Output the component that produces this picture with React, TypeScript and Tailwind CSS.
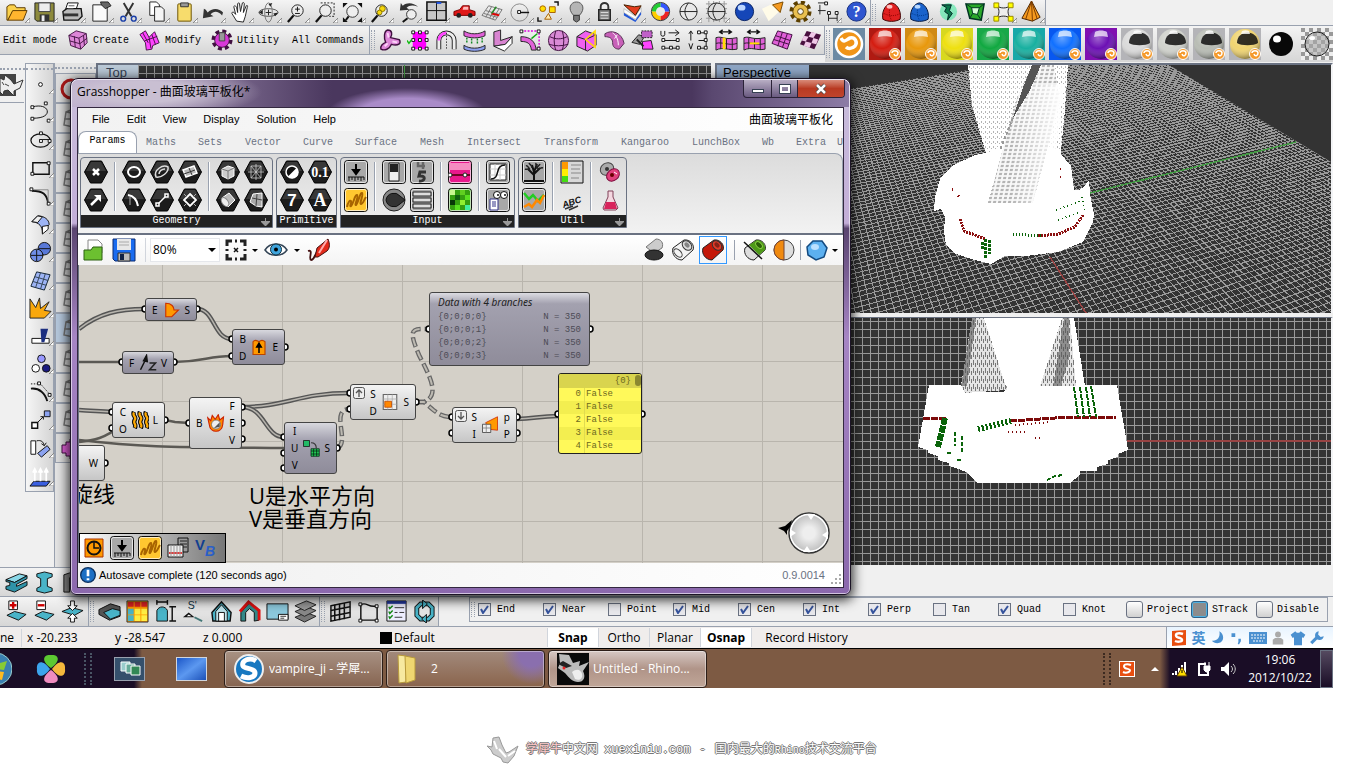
import type { ReactNode } from 'react';
import clsx from 'clsx';

const SONG = "font-['Liberation_Mono','Noto_Sans_CJK_SC',monospace] text-[10px]";
const SEGOE = "font-['Open_Sans','Noto_Sans_CJK_SC',sans-serif]";

type Item = [string, ReactNode];

const PINK = '#e060d8';

const lens = (
  <>
    <path d="M9 15l-6 7" stroke="#111" strokeWidth="2.4" />
    <circle cx="13" cy="10" r="6" fill="#eee" fillOpacity=".8" stroke="#222" />
  </>
);

const FILE_TOOLS: Item[] = [
  ['Open', <><path d="M2 20V6l3-2h5l2 3h9v4H8L3 20z" fill="#fbd14b" stroke="#5c3b00" /><path d="M3 20L8 10h15l-4 10z" fill="#ffb52e" stroke="#5c3b00" /></>],
  ['Save', <><path d="M2 2h20v19H4l-2-2z" fill="#8d8a3c" stroke="#222" /><path d="M6 2h12v9H6z" fill="#eee" stroke="#444" /><path d="M7 14h10v7H7z" fill="#333" /><path d="M9 15h3v6H9z" fill="#eee" /></>],
  ['Print', <><path d="M7 2h11l-3 9H4z" fill="#fff" stroke="#111" /><path d="M2 11l4-3h15l1 8-4 4H3z" fill="#bbb" stroke="#111" strokeWidth="1.4" /><path d="M3 13h15v3H3z" fill="#333" /><path d="M8 5h6M7 8h6" stroke="#555" /></>],
  ['Properties', <><path d="M4 4h12l3 3v14H4z" fill="#fafafa" stroke="#222" /><path d="M12 1h8l3 4-6 3-4-4z" fill="#666" stroke="#222" /></>],
  ['Cut', <><path d="M7 2l8 14M17 2L9 16" stroke="#333" strokeWidth="2" /><circle cx="6.5" cy="18.5" r="2.5" fill="none" stroke="#1a3fa8" strokeWidth="1.5" /><circle cx="17.5" cy="18.5" r="2.5" fill="none" stroke="#1a3fa8" strokeWidth="1.5" /></>],
  ['Copy', <><path d="M5 1h7l3 3v11H5z" fill="#fff" stroke="#222" /><path d="M10 6h7l3 3v12H10z" fill="#f5f5f5" stroke="#222" /></>],
  ['Paste', <><rect x="5" y="3" width="14" height="18" rx="1" fill="#f7dc6c" stroke="#6b5200" /><path d="M8 2h8v4H8z" fill="#999" stroke="#333" /></>],
  ['Undo', <path d="M5 9l2 3c4-5 12-5 16 0l-1 3c-4-5-9-5-12-1l3 2-11 2 1-10z" fill="#333" />],
  ['Pan', <path d="M8 21l-5-8c0-2 2-2 4 1L5 6c1-2 2-1 3 1l1 5V3c1-2 2-1 2 0l1 8 2-9c1-1 2 0 2 1l-1 9 3-7c1-1 2 0 1 2l-2 9-2 6z" fill="#fff" stroke="#222" />],
  ['Rotate view', <><ellipse cx="12" cy="12" rx="10" ry="4" fill="none" stroke="#555" /><ellipse cx="12" cy="12" rx="4" ry="10" fill="none" stroke="#777" /><path d="M12 9v6M9 12h6" stroke="#222" /><path d="M6 9v5l-4-2zM17 13l5-1-3 4zM12 3l4-1-2 4z" fill="#222" /></>],
  ['Zoom dynamic', <>{lens}<path d="M13 6v5M10.5 8.500h5M10.5 13h5" stroke="#111" /></>],
  ['Zoom window', <>{lens}<path d="M8 2h14v14h-5" fill="none" stroke="#222" strokeDasharray="2 1.5" /></>],
  ['Zoom extents', <><path d="M8 16l-3 4" stroke="#111" strokeWidth="2" /><circle cx="12" cy="11" r="6" fill="#eee" stroke="#333" /><path d="M2 2h5L2 7zM22 2v5l-5-5zM2 22v-5l5 5zM22 22h-5l5-5z" fill="#111" /></>],
  ['Zoom selected', <>{lens}<circle cx="14" cy="8" r="3" fill="#f5d70a" stroke="#8a7400" /><circle cx="11" cy="12" r="2.5" fill="#f5d70a" stroke="#8a7400" /></>],
  ['Undo view', <><path d="M6 5c5-4 11-3 16 1-5-2-9-2-12 1l3 2-10 1 1-8z" fill="#333" /><circle cx="15" cy="14" r="5" fill="#eee" stroke="#333" /><path d="M11 18l-5 4" stroke="#111" strokeWidth="2" /></>],
  ['Four views', <><path d="M2 1h20v19H2z" fill="#c8c8c8" stroke="#111" strokeWidth="1.6" /><path d="M12 1v19M2 10h20" stroke="#111" /><path d="M12 1h5v2h-5z" fill="#1a4fe0" /></>],
  ['Set view', <><path d="M1 15v-4l6-2 3-4h7v4l6 2v4z" fill="#e01818" stroke="#7a0000" /><path d="M11 6h5v3h-6z" fill="#fbb" /><circle cx="6" cy="15" r="2.5" fill="#222" /><circle cx="18" cy="15" r="2.5" fill="#222" /></>],
  ['Construction plane', <><path d="M1 15L8 5l14 4-7 11zM5 10l14 4M11 6l-6 11M15 7l-6 11M3 13l14 4M19 8l-7 11" fill="none" stroke="#777" /><path d="M11 13l8 2" stroke="#d00" strokeWidth="2" /><path d="M11 13l5-7" stroke="#2a8c2a" strokeWidth="1.5" /></>],
  ['Object snap', <><circle cx="11" cy="12" r="9" fill="none" stroke="#888" /><path d="M11 12h10" stroke="#111" strokeWidth="1.5" /><path d="M9 10h3v3H9z" fill="#fff" stroke="#111" /></>],
  ['Select', <><circle cx="6" cy="8" r="3" fill="#fd0" stroke="#a66000" /><path d="M13 6h6v6h-6z" fill="#fd0" stroke="#a66000" /><path d="M8 19l4-6 3 6z" fill="#ffe9b0" stroke="#a66000" /><path d="M1 17v4h4M18 1h4v4" fill="none" stroke="#111" strokeWidth="1.5" /></>],
  ['Hide', <><path d="M9 15C2 8 6 1 12 1s10 7 3 14z" fill="#b5b5b5" stroke="#555" /><path d="M9 15h6v5l-3 2-3-2z" fill="#777" stroke="#333" /></>],
  ['Lock', <><path d="M8 10V6a4 4 0 0 1 8 0v4" fill="none" stroke="#333" strokeWidth="2" /><path d="M6 9h12v11H6z" fill="#888" stroke="#222" strokeWidth="1.5" /><path d="M8 12h8M8 15h8M8 18h8" stroke="#ddd" /></>],
  ['Layers', <><path d="M3 12l12 8 6-10v4l-6 8-12-7z" fill="#2458d8" /><path d="M3 8l12 8 6-9v4l-6 8-12-7z" fill="#fff" stroke="#999" strokeWidth=".5" /><path d="M3 4l11 2 7-1-6 10z" fill="#e33d1e" stroke="#402000" /></>],
  ['Object properties', <><circle cx="12" cy="11" r="7" fill="none" stroke="#e22" strokeWidth="4.5" strokeDasharray="11 33" /><circle cx="12" cy="11" r="7" fill="none" stroke="#fc0" strokeWidth="4.5" strokeDasharray="11 33" strokeDashoffset="33" /><circle cx="12" cy="11" r="7" fill="none" stroke="#2c3" strokeWidth="4.5" strokeDasharray="11 33" strokeDashoffset="22" /><circle cx="12" cy="11" r="7" fill="none" stroke="#35f" strokeWidth="4.5" strokeDasharray="11 33" strokeDashoffset="11" /><circle cx="12" cy="11" r="9.5" fill="none" stroke="#333" /></>],
  ['Wireframe', <><circle cx="12" cy="11" r="9" fill="#e8e8e8" stroke="#222" /><path d="M3 11h18M12 2c-5 6-5 12 0 18" fill="none" stroke="#222" /></>],
  ['Mesh preview', <><path d="M1 3h22M1 8h22M1 13h22M1 18h22M4 0v22M9 0v22M15 0v22M20 0v22" stroke="#999" /><circle cx="12" cy="11" r="9" fill="#ddd" stroke="#222" /><path d="M3 11h18M12 2c-5 6-5 12 0 18" fill="none" stroke="#222" /></>],
  ['Render', <><circle cx="12" cy="11" r="9.5" fill="#1546b8" stroke="#092464" /><ellipse cx="9" cy="7" rx="4" ry="3" fill="#bcd6ff" /></>],
  ['Spotlight', <><path d="M1 8l13-6 5 9-11 10z" fill="#fffbe8" /><path d="M12 4l11-3-3 11z" fill="#f59a1f" stroke="#7a4a00" /></>],
  ['Options', <><circle cx="12" cy="11" r="9" fill="none" stroke="#5c4000" strokeWidth="5" strokeDasharray="4 3.07" /><circle cx="12" cy="11" r="8" fill="#e9bf4f" stroke="#5c4000" /><circle cx="12" cy="11" r="3" fill="#f4f4f4" stroke="#5c4000" /></>],
  ['Dimension', <><path d="M3 4v10M1 2h8M1 10h8M12 12v9M21 12v9M12 18h9" stroke="#222" fill="none" /><path d="M8 1h3v3H8zM11 11h3v3h-3zM19 11h3v3h-3z" fill="#fff" stroke="#111" /></>],
  ['Help', <><circle cx="12" cy="11" r="10" fill="#2f55d0" stroke="#16307f" /><text x="12" y="17" textAnchor="middle" fontSize="17" fontWeight="bold" fill="#fff" fontFamily="Liberation Serif">?</text></>],
];

const TSPLINE_TOP: Item[] = [
  ['Red box', <><path d="M3 19C1 9 8 2 12 2s11 7 9 17c-5 3-13 3-18 0z" fill="#e02020" stroke="#3c0000" /><path d="M4 13c6 3 12 3 17 0M12 2c-3 6-3 13 0 18" stroke="#8c0000" fill="none" strokeDasharray="1 1" /><ellipse cx="10" cy="6" rx="3" ry="2" fill="#ffc0c0" /></>],
  ['Blue box', <><path d="M3 19C1 9 8 2 12 2s11 7 9 17c-5 3-13 3-18 0z" fill="#1a63cc" stroke="#00143c" /><path d="M4 13c6 3 12 3 17 0M12 2c-3 6-3 13 0 18" stroke="#003a8c" fill="none" strokeDasharray="1 1" /><ellipse cx="10" cy="6" rx="3" ry="2" fill="#b8d8ff" /></>],
  ['Flow', <><circle cx="13" cy="11" r="9" fill="#46e8a0" opacity=".6" /><path d="M6 4h10l-2 6 3 3-5 7 1-6-4-3 2-4z" fill="#0b7a4b" stroke="#022" /></>],
  ['Cage', <><path d="M2 3h19l-3 17-12-2z" fill="#2aa82a" stroke="#032" strokeWidth="1.5" /><path d="M8 7h8l-2 7-5-1z" fill="#d8ffd8" stroke="#032" /><path d="M2 3l6 4M21 3l-5 4M18 20l-4-6M6 18l3-5" stroke="#032" /></>],
  ['Edit points', <><path d="M5 5c4 3 10 3 14 0-3 4-3 8 0 13-4-3-10-3-14 0 3-5 3-9 0-13z" fill="#eee" stroke="#222" /><path d="M2 2h5v5H2zM17 2h5v5h-5zM2 16h5v5H2zM17 16h5v5h-5z" fill="#ff0" stroke="#998800" /></>],
  ['Pyramid', <><path d="M12 0l9 17-8 4-11-3z" fill="#f59a1f" stroke="#4a2400" /><path d="M12 0l1 21M12 0L6 19M12 0l6 19" fill="none" stroke="#7a3c00" /></>],
];

const TS_TOOLS: Item[] = [
  ['Pipe', <><path d="M9 1c5 0 5 5 3 8l9 2c3 4-1 7-8 5-2 5-7 7-11 5-1-3 2-6 5-7C5 10 5 2 9 1z" fill="#dd86d8" stroke="#401040" strokeWidth="1.5" /><path d="M9 4l1 5M6 18l3-3M14 13l5 1" stroke="#fbd4f8" strokeWidth="2" /></>],
  ['Box grid', <><path d="M6 3h14v18H6z" fill="#f0f" /><path d="M5 2h3v3H5zM12 2h3v3h-3zM19 2h3v3h-3zM5 10h3v3H5zM12 10h3v3h-3zM19 10h3v3h-3zM5 19h3v3H5zM12 19h3v3h-3zM19 19h3v3h-3z" fill="#fff" stroke="#111" /><path d="M0 12l2 3 3-4" fill="none" stroke="#1b1" strokeWidth="1.5" /></>],
  ['Symmetry', <><path d="M4 21v-9a8 8 0 0 1 16 0v9" fill="none" stroke="#222" strokeWidth="5" /><path d="M4 21v-9a8 8 0 0 1 16 0v9" fill="none" stroke="#eee" strokeWidth="3" /><path d="M4 12a8 8 0 0 1 8-8" fill="none" stroke="#f4f" strokeWidth="3" /><path d="M12 4v18" stroke="#333" strokeDasharray="1.5 1.5" /></>],
  ['Match', <><path d="M1 2c6 4 16 4 22 0v5c-6 3-16 3-22 0z" fill={PINK} stroke="#222" /><path d="M1 17c6 4 16 4 22 0v4c-6 3-16 3-22 0z" fill="#8ca0f0" stroke="#222" /><path d="M4 9v6M9 10v6M15 10v6M20 9v6" stroke="#182" strokeDasharray="2 1" strokeWidth="1.5" /></>],
  ['Bevel', <><path d="M3 3l7-2v11l12-4-7 8-12 2z" fill="#d884d0" stroke="#222" /><path d="M3 18l12-2 7-8v7l-8 8z" fill="#fff" stroke="#222" /></>],
  ['Bridge edge', <><path d="M2 8c10 0 15 5 16 14h-5c-1-7-4-9-11-9z" fill={PINK} stroke="#222" /><path d="M2 2h19v19" fill="none" stroke="#d0d" strokeDasharray="2 1.5" strokeWidth="1.5" /><path d="M1 1h3v3H1zM19 1h3v3h-3zM19 19h3v3h-3z" fill="#fff" stroke="#111" /><path d="M13 10l6-5" stroke="#1a1" strokeWidth="1.5" /></>],
  ['Sphere', <><circle cx="12" cy="12" r="10.5" fill="#d98ad6" stroke="#401040" /><path d="M3 8c6 3 12 3 18 0M2 16c7 2 13 2 20 0M9 2c-2 7-2 14 0 20M16 2c2 7 2 14 0 20" fill="none" stroke="#401040" /></>],
  ['Crease', <><path d="M2 8l9-6 11 4v11l-9 6-11-5z" fill="#f060f0" stroke="#222" /><path d="M2 8l9 3v11M11 11l11-5" stroke="#222" fill="none" /><path d="M11 11l10-9v17L11 11z" fill="none" stroke="#fd0" strokeWidth="1.5" /></>],
  ['Sweep', <><path d="M2 5c7-5 18-1 20 10l-5 6c-4 0-7-2-7-7 0-4-3-6-8-6z" fill="#c860b8" stroke="#503050" /><path d="M10 4c3 2 6 6 6 13M15 6l-3 4" fill="none" stroke="#fff" /></>],
  ['Convert', <><path d="M1 14l7-8 6 2-5 8z" fill="#999" stroke="#222" /><path d="M11 2h11v7H11z" fill="#c060c8" stroke="#222" strokeDasharray="2 1" /><path d="M12 13l9-1 2 9H12z" fill="#f4f" stroke="#222" /><path d="M6 11l7 7" stroke="#222" strokeWidth="2" /></>],
  ['U align', <><path d="M2 2v4c0 2 4 2 4 0V2M10 4h10M17 1l4 3-4 3M4 12h16M4 20h16" fill="none" stroke="#111" /><path d="M3 10h3v3H3zM18 10h3v3h-3zM3 18h3v3H3zM11 18h3v3h-3zM18 18h3v3h-3z" fill="#fff" stroke="#111" /></>],
  ['V align', <><path d="M4 12V3M2 5l2-3 2 3M2 15l2 6 2-6M12 4h8M12 12h8M12 20h8M20 4v16" fill="none" stroke="#111" /><path d="M11 2h3v3h-3zM18 2h3v3h-3zM18 10h3v3h-3zM11 18h3v3h-3zM18 18h3v3h-3z" fill="#fff" stroke="#111" /></>],
  ['Slide edge', <><path d="M1 9c7-2 8 3 22 0v12c-9 2-14-3-22 1z" fill={PINK} stroke="#222" /><path d="M6 9v12M12 10v11M18 10v12M1 15c7-2 14 3 22 0" fill="none" stroke="#222" /><path d="M8 9h3v12H8z" fill="#fd0" /><path d="M6 3h10M8 1L5 3l3 2M14 1l3 2-3 2" fill="none" stroke="#111" strokeWidth="1.5" /></>],
  ['Merge edge', <><path d="M1 9c7-2 8 3 22 0v12c-9 2-14-3-22 1z" fill={PINK} stroke="#222" /><path d="M6 9v12M12 10v11M18 10v12M1 15c7-2 14 3 22 0" fill="none" stroke="#222" /><path d="M7 14h10v2H7z" fill="#fd0" /><path d="M6 3h10M8 1L5 3l3 2M14 1l3 2-3 2" fill="none" stroke="#111" strokeWidth="1.5" /></>],
  ['Subdivide', <><path d="M7 2l15 4-5 15L1 15z" fill={PINK} stroke="#401040" /><path d="M12 3L7 18M17 5l-5 14M5 7l15 5M3 11l16 5" stroke="#401040" /></>],
  ['Checker', <><path d="M8 2l15 4-7 15-15-5z" fill="#4a1040" /><path d="M13 3l5 1.5-3 5-5-1.5zM5 7l5 1-3 5-4-1zM15 9.500l5 1.500-2 5-5-1.500zM7 13l6 1.500-2 5-6-2z" fill="#f0c8e8" /></>],
];

const MATERIALS: [string, string, string, boolean][] = [
  ['Red', '#b01a12', '#d41c10', false],
  ['Orange', '#d08a14', '#e8980c', false],
  ['Yellow', '#d8d820', '#eee010', false],
  ['Green', '#18a848', '#10a840', false],
  ['Teal', '#18a8a8', '#18b0a0', false],
  ['Blue', '#0858f0', '#1070ff', false],
  ['Purple', '#8010b0', '#6c10b4', false],
  ['Chrome', '#b4b4b8', '#dadada', true],
  ['Steel', '#b4b4b8', '#d0d2cc', true],
  ['Brushed', '#b4b4b8', '#b8bcb4', true],
  ['Gold', '#b4b4b8', '#f0d470', true],
];

const SIDE_TOOLS: Item[] = [
  ['Point', <circle cx="12" cy="12" r="2" fill="#fff" stroke="#111" />],
  ['Curve', <><path d="M4 6c8-2 14 0 15 4s-3 8-15 8" fill="none" stroke="#111" /><path d="M2 5h3v3H2zM16 1h3v3h-3zM2 17h3v3H2zM19 19h3v3h-3z" fill="#fff" stroke="#111" /></>],
  ['Ellipse', <><ellipse cx="12" cy="12" rx="10" ry="7" fill="none" stroke="#111" strokeWidth="1.3" /><path d="M11 11h11" stroke="#111" /><path d="M11 3h3v3h-3zM11 11h3v3h-3zM20 11h3v3h-3z" fill="#fff" stroke="#111" /></>],
  ['Rectangle', <><path d="M4 6h17v12H4z" fill="none" stroke="#111" strokeWidth="1.5" /><path d="M2 16h3v3H2zM19 5h3v3h-3z" fill="#fff" stroke="#111" /></>],
  ['Fillet', <><path d="M3 6c11 0 16 3 17 14" fill="none" stroke="#111" strokeWidth="2" /><path d="M5 5h15v13" fill="none" stroke="#888" /><path d="M1 3h3v3H1zM19 18h3v3h-3z" fill="#fff" stroke="#111" /></>],
  ['Surface', <><path d="M3 9l6-6c7 0 12 4 12 9l-7 9c0-7-3-11-11-12z" fill="#9db4f5" stroke="#111" /><path d="M3 9l6-6 5 1-5 6z" fill="#eee" stroke="#111" /><path d="M14 14l6-1v4l-6 5z" fill="#fff" stroke="#111" /></>],
  ['Solid', <><circle cx="16" cy="8" r="6.5" fill="#5878d8" stroke="#111" /><circle cx="8" cy="15" r="6.5" fill="#6f8de6" stroke="#111" /><path d="M2 15h13M8 9v12M10 8h12" stroke="#111" /></>],
  ['Mesh', <><path d="M8 3l14 3-6 16-14-4z" fill="#9db4f5" stroke="#123" /><path d="M12 4L7 19M17 5l-5 16M6 8l14 4M4 13l14 4" stroke="#345" /></>],
  ['Explode', <path d="M1 22V2l6 9 4-10 1 11 9-7-5 9 7 1-7 7z" fill="#f9a80d" stroke="#222" />],
  ['Trim', <><path d="M3 14h18v5H3z" fill="#fff" stroke="#111" /><path d="M12 4h8l-4 14h-3z" fill="#1c2f80" /></>],
  ['Group', <><circle cx="13" cy="6" r="4" fill="#99f" stroke="#111" /><circle cx="7" cy="16" r="4" fill="#fff" stroke="#111" /><circle cx="18" cy="16" r="4" fill="#1a1a80" stroke="#111" /></>],
  ['Edit curve', <><path d="M2 8c9-1 15 5 17 13" fill="none" stroke="#111" strokeWidth="2" /><path d="M2 3h10l8 9" fill="none" stroke="#111" strokeDasharray="1.5 1.5" /><path d="M9 1h3v3H9zM20 13h3v3h-3z" fill="#fff" stroke="#111" /></>],
  ['Move', <><path d="M3 14h6v6H3z" fill="#fff" stroke="#111" strokeWidth="1.5" /><path d="M16 2h6v6h-6z" fill="#8ba2f0" stroke="#111" /><path d="M9 14l6-6M12 8h3v3" fill="none" stroke="#111" /></>],
  ['Rotate', <><path d="M2 4h5v14H2z" fill="#fff" stroke="#111" /><path d="M9 17L19 9l3 4-9 8z" fill="#8ba2f0" stroke="#111" /><path d="M8 4c5-1 7 1 8 5M13 7l3 2 2-3" fill="none" stroke="#111" /></>],
  ['Project', <><path d="M5 17h17l-4 5H1z" fill="#3a5fe0" stroke="#111" /><path d="M6 17V6M12 17V6M18 17V6M4 8l2-4 2 4M10 8l2-4 2 4M16 8l2-4 2 4" fill="none" stroke="#fff" strokeWidth="1.8" /></>],
];

const CYAN = '#49b4c8';
const slab = <path d="M2 16l8-4 12 3-8 6z" fill={CYAN} stroke="#111" />;

const BEAM_TOOLS: Item[] = [
  ['Beam', <><path d="M1 9l14-6 8 2-13 7z" fill="#8ad8e8" stroke="#111" /><path d="M1 9l9 3 13-7v3l-11 6v2l11-5v4l-13 7-9-3v-3l4-1v-3l-4-1z" fill="#2f93a8" stroke="#111" /></>],
  ['Column', <path d="M4 3l8-2 8 2v3l-5 2v8l5 2v3l-8 2-8-2v-3l4-2V8L4 6z" fill={CYAN} stroke="#111" />],
  ['Frame', <path d="M3 22V4l6-2h12v5H9v15z" fill="#888" stroke="#111" />],
];

const SLAB_TOOLS: Item[] = [
  ['Add slab', <>{slab}<path d="M4 1h9v9H4z" fill="#fff" stroke="#111" /><path d="M8.5 2v7M5 5.500h7" stroke="#c00" strokeWidth="2.5" /></>],
  ['Subtract slab', <>{slab}<path d="M4 1h9v9H4z" fill="#fff" stroke="#111" /><path d="M5 5.500h7" stroke="#c00" strokeWidth="2.5" /></>],
  ['Split slab', <><path d="M1 12l10-4 12 3-9 5z" fill={CYAN} stroke="#111" /><path d="M10 1h4v5h3l-5 5-5-5h3zM10 23v-4H7l5-5 5 5h-3v4z" fill="#fff" stroke="#111" /></>],
];

const ARCH_TOOLS: Item[] = [
  ['Box section', <><path d="M1 10l12-6 10 3v10l-11 4-11-6z" fill="#555" stroke="#111" /><path d="M6 13l9-4 8 2v5l-10 4z" fill={CYAN} stroke="#111" /></>],
  ['Curtain wall', <><path d="M1 1h22v22H1z" fill="#f90" /><path d="M2 2h6v5H2zM9 2h6v5H9zM16 2h6v5h-6z" fill="#d22" /><path d="M2 9h6v6H2zM2 16h6v6H2z" fill={CYAN} /><path d="M9 9h6v6H9zM16 9h6v6h-6zM9 16h6v6H9zM16 16h6v6h-6z" fill="#fe4" /><path d="M1 1h22v22H1z" fill="none" stroke="#333" /></>],
  ['Door', <><path d="M3 22V11c2-5 9-5 11 0v11z" fill={CYAN} stroke="#111" /><path d="M3 2h11M3 0v5M14 0v5M19 7v15M16 7h7M16 22h7" stroke="#111" strokeWidth="1.5" /></>],
  ['Section mark', <><text x="6" y="9" fontSize="11" fontFamily="Liberation Sans" fill="#134">S&apos;</text><path d="M1 18l6-5 6 5z" fill="#111" /><path d="M5 17l2-2 3 2z" fill="#fff" /><path d="M13 18l8 4" stroke="#477" strokeWidth="2" fill="none" /></>],
  ['House', <><path d="M2 13L12 2l10 11-1 9H3z" fill={CYAN} stroke="#111" strokeWidth="1.5" /><path d="M6 22V12l6-7 6 7v10z" fill="#bfe4ec" stroke="#111" /><path d="M9 22v-9h6v9z" fill="#fff" stroke="#111" /></>],
  ['Roof', <><path d="M3 22v-9l9-10 10 9v9l-5 1V13l-5-4-4 4v9z" fill="#388" stroke="#111" /><path d="M2 12L11 2l11 9v10" fill="none" stroke="#d11" strokeWidth="3" /></>],
  ['Sheet', <><path d="M1 4h22v16H1z" fill="#8cc8dc" stroke="#111" /><path d="M13 15h10v6H13z" fill="#fff" stroke="#111" /><path d="M15 17h6M15 19h4" stroke="#333" /></>],
  ['Levels', <><path d="M1 18l10 5 12-6-10-4z" fill="#777" stroke="#222" /><path d="M1 12l10 5 12-6-10-4z" fill="#888" stroke="#222" /><path d="M1 6l10 5 12-6-10-4z" fill="#999" stroke="#222" /></>],
];

const WALL_TOOLS: Item[] = [
  ['Grid wall', <><path d="M2 6l20-4v16L2 22z" fill="#ccc" stroke="#111" strokeWidth="1.5" /><path d="M6 5v17M11 4v17M16 3v17M2 11l20-4M2 17l20-4" stroke="#111" strokeWidth="1.6" /></>],
  ['Outline', <><path d="M4 21V5c6-4 8 4 17 1v15z" fill="none" stroke="#111" strokeWidth="1.5" /><path d="M2 3h3v3H2zM19 5h3v3h-3zM2 20h3v3H2zM19 20h3v3h-3z" fill="#fff" stroke="#111" /></>],
  ['Checklist', <><path d="M2 1h20v21H2z" fill="#eef" stroke="#111" /><path d="M2 1h20v3H2z" fill="#2338a0" /><path d="M10 8h10M10 13h3M15 13h5M10 18h8" stroke="#333" /><path d="M4 7l1 2 3-3M4 12l1 2 3-3M4 17l1 2 3-3" fill="none" stroke="#181" strokeWidth="1.5" /></>],
  ['Update', <><path d="M11 20H8l-4-4V8l4-4h5" stroke="#111" strokeWidth="5" fill="none" /><path d="M13 4h3l4 4v8l-4 4h-5" stroke="#111" strokeWidth="5" fill="none" /><path d="M11 20H8l-4-4V8l4-4h5M13 4h3l4 4v8l-4 4h-5" stroke={CYAN} strokeWidth="3" fill="none" /><path d="M10 0l5 4-5 5zM14 15l-5 5 5 4z" fill={CYAN} stroke="#111" /></>],
];

const SNAPS: [string, boolean][] = [
  ['End', true], ['Near', true], ['Point', false], ['Mid', true], ['Cen', true],
  ['Int', true], ['Perp', true], ['Tan', false], ['Quad', true], ['Knot', false],
];

function Glyph({ size = 24, children }: { size?: number; children: ReactNode }) {
  return (
    <svg width={size} height={size} viewBox="0 0 24 24" fill="none" className="block shrink-0">
      {children}
    </svg>
  );
}

function ToolButton({ label, children, corner = true }: { label: string; children: ReactNode; corner?: boolean }) {
  return (
    <button aria-label={label} className="relative flex h-7 w-7 shrink-0 items-center justify-center">
      <Glyph size={23}>{children}</Glyph>
      {corner && (
        <svg width="5" height="5" className="absolute right-0 bottom-1">
          <path d="M5 0v5H0z" fill="#fff" stroke="#888" />
        </svg>
      )}
    </button>
  );
}

function Grip() {
  return <span className="mx-px my-1 w-1 shrink-0 self-stretch border-x border-dotted border-gray-400" />;
}

function DownArrow() {
  return <span className="border-x-[3px] border-t-[3px] border-x-transparent border-t-black" />;
}

function HexTool({ label, children }: { label: string; children: ReactNode }) {
  return (
    <button aria-label={label} className="flex h-7 w-7 items-center justify-center">
      <Glyph>
        <path d="M6.5 1h11L23.500 12l-6 11h-11L.5 12z" fill="#1c1c1c" stroke="#000" />
        <path d="M7 2h10l5 9H2z" fill="#383838" />
        {children}
      </Glyph>
    </button>
  );
}

function BoxTool({ label, fill = '#a8a8a8', frame = true, children }: { label: string; fill?: string; frame?: boolean; children: ReactNode }) {
  return (
    <button aria-label={label} className="flex h-7 w-7 items-center justify-center">
      <Glyph>
        {frame && <rect x=".5" y=".5" width="23" height="23" rx="3" fill={fill} stroke="#111" />}
        {frame && <rect x="1.5" y="1.5" width="21" height="21" rx="2" stroke="#fff" strokeOpacity=".7" />}
        {children}
      </Glyph>
    </button>
  );
}

function RibbonGroup({ title, sections, more }: { title: string; sections: ReactNode[]; more?: boolean }) {
  return (
    <section className="overflow-hidden rounded-t border border-gray-500 bg-gradient-to-b from-[#dadada] to-[#f0f0f0]">
      <div className="flex h-[57px] pr-[2px] pl-px">
        {sections.map((s, i) => (
          <div key={i} className="flex">
            {i > 0 && <span className="mx-1 my-1 w-[2px] border-l border-gray-400 bg-white" />}
            <div className="grid grid-flow-col grid-rows-[28px_28px]">{s}</div>
          </div>
        ))}
      </div>
      <div className={clsx(SONG, 'relative h-3 bg-[#222] text-center leading-[11px] text-white')}>
        {title}
        {more && (
          <svg width="9" height="9" viewBox="0 0 9 9" className="absolute right-[2px] bottom-0">
            <path d="M4 0h1v3h4v1L5 8H4L0 4V3h4z" fill="#999" />
          </svg>
        )}
      </div>
    </section>
  );
}

const scribble = <path d="M3 19c1-5 3-7 4-6s-2 6 0 5 4-12 6-11-3 11-1 10 4-13 6-12-3 11-1 11 3-4 5-7" stroke="#a86400" strokeWidth="2" fill="none" />;
const importGlyph = (
  <>
    <path d="M12 4v8M9 10l3 4 3-4z" fill="#000" stroke="#000" strokeWidth="2" />
    <path d="M4 17h16M5 17v4M8 17v3M11 17v4M14 17v3M17 17v4M20 17v3" stroke="#111" />
  </>
);

function Ribbon() {
  return (
    <div className="flex h-20 items-start gap-[3px] rounded-tr-lg border-t border-r border-gray-400 bg-gradient-to-b from-[#dcdcdc] to-[#f2f2f2] pt-[3px] pl-[2px]">
      <RibbonGroup
        title="Geometry"
        more
        sections={[
          <>
            <HexTool label="Point"><path d="M9 9l6 6M15 9l-6 6" stroke="#fff" strokeWidth="2.5" /></HexTool>
            <HexTool label="Vector"><path d="M7 17l7-7" stroke="#fff" strokeWidth="2.5" /><path d="M10 7h7v7z" fill="#fff" /></HexTool>
          </>,
          <>
            <HexTool label="Circle"><ellipse cx="12" cy="12" rx="6" ry="5" stroke="#fff" strokeWidth="2" /></HexTool>
            <HexTool label="Arc"><path d="M6 7c6 1 9 5 10 11" stroke="#fff" strokeWidth="2" /><path d="M8 9v8" stroke="#aaa" /></HexTool>
            <HexTool label="Curve"><path d="M6 17c-3-7 7-13 12-10 1 5-6 11-12 10z" stroke="#ddd" strokeWidth="1.5" /><path d="M9 14c0-3 3-5 6-5" stroke="#ddd" strokeWidth="1.5" /></HexTool>
            <HexTool label="Line"><path d="M8 16l8-8" stroke="#fff" strokeWidth="1.5" /><path d="M15 6h3v3h-3zM6 15h3v3H6z" stroke="#fff" strokeWidth="1.5" fill="#222" /></HexTool>
            <HexTool label="Plane"><path d="M5 10l11-4 3 7-11 4z" stroke="#fff" strokeWidth="1.5" fill="#bbb" /><path d="M11 8l3 7M6 14l11-4" stroke="#333" /></HexTool>
            <HexTool label="Rectangle"><path d="M12 6l6 6-6 6-6-6z" stroke="#fff" strokeWidth="1.8" /><path d="M6 6l3 3M18 6l-3 3M6 18l3-3M18 18l-3-3" stroke="#aaa" /></HexTool>
          </>,
          <>
            <HexTool label="Box"><path d="M6 9l6-3 6 2v8l-6 3-6-3z" fill="#ccc" stroke="#fff" /><path d="M12 11v8M6 9l6 2 6-3" stroke="#777" /></HexTool>
            <HexTool label="Brep"><path d="M6 10l7-5 6 7-7 7z" fill="#bbb" stroke="#fff" /><ellipse cx="9" cy="14" rx="3" ry="5" transform="rotate(-35 9 14)" fill="#eee" stroke="#888" /></HexTool>
            <HexTool label="Mesh"><path d="M7 6h10v12H7zM12 4v16M4 12h16M7 6l10 12M17 6L7 18" stroke="#ccc" strokeWidth=".8" /></HexTool>
            <HexTool label="Surface"><path d="M9 6l9-1v14l-6-1-6-4z" fill="#aaa" stroke="#fff" /><path d="M13 6l-1 12M8 10l10 2" stroke="#444" /></HexTool>
          </>,
        ]}
      />
      <RibbonGroup
        title="Primitive"
        sections={[
          <>
            <HexTool label="Boolean"><circle cx="12" cy="12" r="6" stroke="#fff" strokeWidth="1.5" fill="#111" /><path d="M16.500 8a6 6 0 0 1-8.500 8.500z" fill="#fff" /></HexTool>
            <HexTool label="Integer"><text x="12" y="18" textAnchor="middle" fontSize="17" fontWeight="bold" fill="#fff" fontFamily="Liberation Sans">7</text></HexTool>
            <HexTool label="Number"><text x="12" y="17" textAnchor="middle" fontSize="14" fontWeight="bold" fill="#fff" fontFamily="Liberation Serif">0.1</text></HexTool>
            <HexTool label="Text"><text x="12" y="18" textAnchor="middle" fontSize="18" fontWeight="bold" fill="#fff" fontFamily="Liberation Serif">A</text></HexTool>
          </>,
        ]}
      />
      <RibbonGroup
        title="Input"
        more
        sections={[
          <>
            <BoxTool label="Import">{importGlyph}</BoxTool>
            <BoxTool label="Scribble" fill="#ffc730">{scribble}</BoxTool>
          </>,
          <>
            <BoxTool label="Toggle"><path d="M7 3h10v18H7z" fill="#eee" stroke="#222" /><path d="M8 4h8v8H8z" fill="#222" /></BoxTool>
            <BoxTool label="Knob" frame={false}><circle cx="12" cy="12" r="11" fill="#888" stroke="#222" /><path d="M4 12a8 8 0 0 1 14-4l5 4-5 4a8 8 0 0 1-14-4z" fill="#333" stroke="#111" /></BoxTool>
            <BoxTool label="Digit scroller"><path d="M8 2v4h7M13 2v7" stroke="#666" strokeWidth="2.5" /><path d="M16 12h-6l-1 4c8-1 6 6 0 5" stroke="#333" strokeWidth="3" /></BoxTool>
            <BoxTool label="Value list"><path d="M3 4h18v4H3zM3 10h18v4H3zM3 16h18v4H3z" fill="#ddd" stroke="#222" /></BoxTool>
          </>,
          <>
            <BoxTool label="Slider" fill="#e8188c"><path d="M1 3h22v7H1z" fill="#f58cc0" /><path d="M2 15h20" stroke="#400" strokeWidth="1.5" /><circle cx="17" cy="15" r="2" fill="#fff" stroke="#222" /><circle cx="2" cy="15" r="2" fill="#fff" stroke="#222" /></BoxTool>
            <BoxTool label="Swatches" fill="#35a010"><path d="M2 2h5v5H2z" fill="#c8f890" /><path d="M12 2h5v5h-5z" fill="#60d020" /><path d="M2 12h5v5H2z" fill="#083808" /><path d="M7 7h5v5H7z" fill="#106010" /><path d="M12 12h5v5h-5z" fill="#90f030" /><path d="M17 7h5v5h-5zM7 17h5v5H7z" fill="#58e020" /><path d="M17 17h5v5h-5z" fill="#40f0a0" /></BoxTool>
          </>,
          <>
            <BoxTool label="Graph mapper"><path d="M4 4h16v16H4z" fill="#fff" stroke="#222" /><path d="M9 4v16M14 4v16M4 9h16M4 15h16" stroke="#ccc" /><path d="M5 19c10 0 3-14 14-14" stroke="#111" strokeWidth="1.5" /></BoxTool>
            <BoxTool label="File reader"><path d="M4 11h8v11H4z" fill="#fff" stroke="#338" /><path d="M6 14h4M6 16h4M6 18h4" stroke="#338" /><circle cx="11" cy="7" r="3.5" fill="#fff" stroke="#111" /><circle cx="18" cy="7" r="3.5" fill="#fff" stroke="#111" /><circle cx="12" cy="7" r="1" fill="#111" /><circle cx="19" cy="7" r="1" fill="#111" /></BoxTool>
          </>,
        ]}
      />
      <RibbonGroup
        title="Util"
        more
        sections={[
          <>
            <BoxTool label="Cherry picker"><path d="M12 21v-9M12 15L6 9M12 14l6-6M12 12l-2-7M12 12l3-8" stroke="#111" strokeWidth="2" /><path d="M3 9c2 1 3-1 5 1M4 6c2-1 2 2 4 3M7 3c1 2 3 2 3 5M14 3c-1 2 2 3 0 5M18 4c-1 2-3 2-3 5M21 8c-2-1-3 1-5 1" stroke="#222" strokeWidth="1.5" /><path d="M2 20h20v2H2z" fill="#111" /></BoxTool>
            <BoxTool label="Param viewer"><path d="M2 5l5 6 4-4 5 6 6-6" stroke="#2c2" strokeWidth="2.5" /><path d="M2 19l5-3 3 3 5-7 3 3 4-8" stroke="#f80" strokeWidth="2.5" /></BoxTool>
          </>,
          <>
            <BoxTool label="Legend" frame={false}><path d="M1 1h22v22H1z" fill="#d8d8d8" stroke="#111" /><path d="M2 2h6v7H2z" fill="#f90" /><path d="M2 9h6v7H2z" fill="#fe0" /><path d="M2 16h6v6H2z" fill="#4d1" /><path d="M11 5h10M11 9h9M11 13h10M11 18h8" stroke="#888" /></BoxTool>
            <BoxTool label="Text tag" frame={false}><text x="2" y="17" fontSize="9" fontStyle="italic" fontWeight="bold" fill="#111" fontFamily="Liberation Sans" transform="rotate(-18 12 14)">ABC</text><path d="M5 21l8-3M9 22l9-4" stroke="#333" strokeWidth="1.5" /></BoxTool>
          </>,
          <>
            <BoxTool label="Cluster" frame={false}><ellipse cx="9" cy="9" rx="7" ry="6" transform="rotate(-35 9 9)" fill="#aaa" stroke="#444" /><ellipse cx="15" cy="15" rx="7" ry="5.5" transform="rotate(-40 15 15)" fill="#e0407c" stroke="#801040" /><circle cx="9" cy="9" r="2" fill="#333" /><circle cx="14" cy="15" r="2" fill="#600" /><path d="M16 12l3 2" stroke="#fff" /></BoxTool>
            <BoxTool label="Galapagos" frame={false}><path d="M10 3h5v6l5 11-2 2H6l-1-2 5-11z" fill="#f4d8e0" stroke="#804058" /><path d="M8 14h9l2 7H6z" fill="#d8245c" /></BoxTool>
          </>,
        ]}
      />
    </div>
  );
}

function Node({ className, dark, left, right, pad, children }: { className: string; dark?: boolean; left: string[]; right: string[]; pad?: ReactNode; children?: ReactNode }) {
  return (
    <div
      className={clsx(
        'absolute flex items-center justify-between rounded-[3px] border border-[#444] px-[6px] text-[10px] leading-3 text-black',
        dark ? 'bg-gradient-to-b from-[#d8d8de] via-[#a3a1af] via-35% to-[#8f8c9a]' : 'bg-gradient-to-b from-[#f4f4f4] to-[#c6c6c6]',
        className,
      )}
    >
      {pad}
      <div className="flex h-full flex-col justify-around text-center">{left.map((l) => <span key={l}>{l}</span>)}</div>
      {children && <Glyph size={18}>{children}</Glyph>}
      <div className="flex h-full flex-col justify-around text-center">{right.map((r, i) => <span key={i}>{r}</span>)}</div>
    </div>
  );
}

function PortTag({ down }: { down?: boolean }) {
  return (
    <svg width="12" height="12" viewBox="0 0 12 12" fill="none" className="mt-[2px] -ml-1 shrink-0 self-start">
      <rect x=".5" y=".5" width="11" height="11" rx="2" fill="#eee" stroke="#555" />
      <path d={down ? 'M6 2v7M3 6l3 3 3-3' : 'M6 10V3M3 6l3-3 3 3'} stroke="#555" strokeWidth="1.3" />
    </svg>
  );
}

const WIRES = [
  'M0 64C20 48 40 44 66 44',
  'M118 44C136 44 134 74 153 74',
  'M163 142C206 142 220 128 271 128',
  'M163 142C186 142 186 172 205 172',
  'M438 154C455 154 460 151 479 151',
  'M0 145C10 146 20 146 33 147',
];
const SINGLE_WIRES = [
  'M0 97h43',
  'M95 97C125 97 128 91 153 91',
  'M86 155l10 2 14 1',
  'M0 175C70 183 100 182 205 183',
  'M0 177c20-2 26-6 33-10',
];
const DASHED_WIRES = [
  'M337 137h8C362 130 350 110 340 90 328 62 334 64 350 64',
  'M337 137h8C356 146 360 152 373 152',
  'M258 183C272 178 250 144 271 144',
];
const PORTS = [
  [66, 44], [118, 44], [153, 74], [153, 91], [206, 82], [43, 97], [95, 97], [33, 147], [33, 163], [86, 155],
  [110, 158], [163, 142], [163, 158], [163, 174], [205, 172], [205, 188], [205, 203], [258, 183], [271, 128], [271, 144],
  [337, 137], [26, 198], [350, 64], [511, 64], [373, 152], [373, 168], [438, 152], [438, 168], [479, 149], [563, 149],
];

function Canvas() {
  return (
    <div className="relative h-[298px] overflow-hidden border-l border-gray-500 bg-[#d4d0c8] font-['Noto_Sans',sans-serif]">
      <svg className="absolute inset-0 h-full w-full" fill="none">
        <defs>
          <pattern id="ghgrid" width="120" height="40" patternUnits="userSpaceOnUse" x="83" y="16">
            <path d="M0 .5h120M.5 0v40" stroke="#b9b5ad" />
          </pattern>
          <radialGradient id="dial"><stop offset=".3" stopColor="#eee" /><stop offset="1" stopColor="#bbb" /></radialGradient>
        </defs>
        <rect width="100%" height="100%" fill="url(#ghgrid)" />
        {WIRES.map((d) => <g key={d}><path d={d} stroke="#555" strokeWidth="4.5" /><path d={d} stroke="#b8b5ae" strokeWidth="1.5" /></g>)}
        {SINGLE_WIRES.map((d) => <path key={d} d={d} stroke="#5b5954" strokeWidth="2.5" />)}
        {DASHED_WIRES.map((d) => (
          <g key={d}>
            <path d={d} stroke="#666" strokeWidth="4.5" strokeDasharray="10 4" />
            <path d={d} stroke="#bdbab2" strokeWidth="2" strokeDasharray="8 6" strokeDashoffset="-1" />
          </g>
        ))}
        {PORTS.map(([x, y]) => <circle key={`${x}-${y}`} cx={x} cy={y} r="3" fill="#fff" stroke="#000" strokeWidth="1.5" />)}
        <circle cx="730" cy="268" r="20" fill="url(#dial)" stroke="#333" strokeWidth="1.5" />
        <circle cx="730" cy="268" r="18.5" stroke="#fff" strokeWidth="1.5" />
        <path d="M728 249h8l-4 6zM724 287h8l-4-6zM711 264v8l6-4zM749 266v8l-6-4z" fill="#fff" />
        <path d="M699 263l7-2 7-6-2 7-3 4v4l-3-4z" fill="#000" />
      </svg>
      <Node className="top-[33px] left-[66px] h-[23px] w-[52px]" dark left={['E']} right={['S']}>
        <path d="M5 3c8 0 11 5 11 9h6l-9 9H5z" fill="#f90" stroke="#c30" strokeWidth="1.5" />
      </Node>
      <Node className="top-[64px] left-[153px] h-[36px] w-[53px]" dark left={['B', 'D']} right={['E']}>
        <path d="M4 5c3-4 6-1 8 0 3-3 6-2 8 0v17H4z" fill="#f90" stroke="#b40" strokeWidth="1.5" /><path d="M12 20V9M9 12l3-5 3 5z" stroke="#000" strokeWidth="2" fill="#000" />
      </Node>
      <Node className="top-[86px] left-[43px] h-[23px] w-[52px]" dark left={['F']} right={['V']}>
        <path d="M2 21L9 7M6 9l4-7 1 8z" stroke="#111" strokeWidth="2" fill="#111" /><path d="M14 12h8l-8 9h9" stroke="#222" strokeWidth="2" />
      </Node>
      <Node className="top-[137px] left-[33px] h-[36px] w-[53px]" left={['C', 'O']} right={['L']}>
        <path d="M4 1c-3 6 4 6 1 11s3 5 0 11M12 1c-3 6 4 6 1 11s3 5 0 11M20 1c-3 6 4 6 1 11s3 5 0 11" stroke="#111" strokeWidth="6" /><path d="M4 2c-3 5 4 5 1 10s3 5 0 10M12 2c-3 5 4 5 1 10s3 5 0 10M20 2c-3 5 4 5 1 10s3 5 0 10" stroke="#fa0" strokeWidth="3" />
      </Node>
      <Node className="top-[132px] left-[110px] h-[52px] w-[53px]" left={['B']} right={['F', 'E', 'V']}>
        <path d="M3 14l-2-9 4 4 2-7 4 5 4-6 2 7 5-4-1 10c-1 12-17 12-18 0z" fill="#f80" stroke="#c20" strokeWidth="1.5" /><circle cx="12" cy="14" r="6" fill="#eee" stroke="#666" /><path d="M9 19l8-8v6z" fill="#555" />
      </Node>
      <Node className="top-[157px] left-[205px] h-[52px] w-[53px]" dark left={['I', 'U', 'V']} right={['S']}>
        <path d="M2 2h8v8H2z" fill="#2b6" stroke="#111" /><path d="M12 5c5 0 7 3 7 7" stroke="#333" strokeWidth="1.5" /><path d="M12 13h11v10H12z" fill="#2c5" stroke="#021" /><path d="M15.500 13v10M19.500 13v10M12 16h11M12 20h11" stroke="#021" />
      </Node>
      <Node className="top-[119px] left-[271px] h-[36px] w-[66px]" left={['S', 'D']} right={['S']} pad={<PortTag />}>
        <path d="M3 2h18v20H3z" fill="#eee" stroke="#666" strokeWidth="1.5" /><path d="M9 2v20M15 2v20M3 8h18M3 15h18" stroke="#aaa" /><path d="M5 11h9v8H5z" fill="#f80" stroke="#b40" />
      </Node>
      <Node className="top-[180px] -left-5 h-[36px] w-[46px]" left={[]} right={['W']} />
      <Node className="top-[142px] left-[373px] h-[36px] w-[65px]" left={['S', 'I']} right={['p', 'P']} pad={<PortTag down />}>
        <path d="M6 9L22 1v18l-9-1z" fill="#f90" stroke="#c20" /><path d="M2 11h11v11H2z" fill="#eee" stroke="#333" /><path d="M7 11v11M2 16h11" stroke="#777" />
      </Node>
      <div className="absolute top-[27px] left-[350px] w-[161px] rounded-[3px] border border-[#444] bg-gradient-to-b from-[#dcdce2] via-[#a3a1af] via-15% to-[#8f8c9a] px-2 pt-px">
        <p className="text-[10px] leading-4 text-[#222] italic">Data with 4 branches</p>
        {['{0;0;0;0}', '{0;0;0;1}', '{0;0;0;2}', '{0;0;0;3}'].map((path) => (
          <p key={path} className="flex justify-between pt-px font-['Liberation_Mono',monospace] text-[9px] leading-3 text-[#4c4b55] last:pb-[3px]">
            <span>{path}</span>
            <span>N = 350</span>
          </p>
        ))}
      </div>
      <div className="absolute top-[108px] left-[479px] w-[84px] overflow-hidden rounded-[3px] border border-[#222] bg-[#fff95a] font-['Liberation_Mono',monospace] text-[9px] leading-[13px] text-[#6b6820]">
        <p className="relative bg-[#d9d44e] pr-[10px] text-right leading-[14px]">
          {'{0}'}
          <span className="absolute top-px right-0 h-[11px] w-[6px] rounded bg-[#8b8830]" />
        </p>
        {[0, 1, 2, 3, 4].map((n) => (
          <p key={n} className="flex odd:bg-[#f3ee50]">
            <span className="w-[26px] border-r border-[#e0db50] pr-[3px] text-right">{n}</span>
            <span className="pl-px">False</span>
          </p>
        ))}
      </div>
      <p className="absolute top-[216px] -left-2 font-['Open_Sans','Noto_Sans_CJK_SC',sans-serif] text-[22px] leading-6 whitespace-nowrap text-black">旋线</p>
      <div className="absolute top-[219px] left-[170px] font-['Open_Sans','Noto_Sans_CJK_SC',sans-serif] text-[22px] leading-[23px] whitespace-nowrap text-black">
        <p>U是水平方向</p>
        <p>V是垂直方向</p>
      </div>
      <div className="absolute bottom-0 left-0 flex border border-black bg-gradient-to-r from-white to-[#777] pr-[5px]">
        <BoxTool label="Timer" frame={false}><path d="M3 3h18v18H3z" fill="#f90" stroke="#a30" /><circle cx="12" cy="12" r="6.5" stroke="#111" strokeWidth="2" /><path d="M12 6v6h5" stroke="#111" strokeWidth="1.5" /></BoxTool>
        <BoxTool label="Import">{importGlyph}</BoxTool>
        <BoxTool label="Scribble" fill="#ffc730">{scribble}</BoxTool>
        <BoxTool label="Sheets" frame={false}><path d="M12 2h10v14H12z" fill="#999" stroke="#111" /><path d="M14 5h7M14 8h7M14 11h7" stroke="#222" /><path d="M2 9h15v12H2z" fill="#eee" stroke="#111" /><path d="M3 17h13" stroke="#d00" strokeWidth="1.5" /><path d="M5 9v12M8 9v12M11 9v12M14 9v12" stroke="#999" /></BoxTool>
        <BoxTool label="VB script" frame={false}><text x="1" y="14" fontSize="15" fontWeight="bold" fill="#123f90" fontFamily="Liberation Sans">V</text><text x="11" y="20" fontSize="14" fontWeight="bold" fontStyle="italic" fill="#2a5fc8" fontFamily="Liberation Sans">B</text></BoxTool>
      </div>
    </div>
  );
}

function Cylinder({ body, cap }: { body: string; cap: string }) {
  return (
    <>
      <path d="M2 10L13 2c6-1 11 5 9 10L11 22C5 22 0 16 2 10z" fill={body} stroke="#222" />
      <ellipse cx="16" cy="7.5" rx="4" ry="5.5" transform="rotate(-45 16 7.5)" fill={cap} stroke="#333" />
      <ellipse cx="16" cy="7" rx="2" ry="3" transform="rotate(-45 16 7)" fill="#000" fillOpacity=".4" />
    </>
  );
}

function CanvasToolbar() {
  return (
    <div className="flex h-8 items-center border-t-2 border-gray-500 bg-gradient-to-b from-white to-[#f4f4f4] px-1">
      <button aria-label="Open file" className="w-[30px]"><Glyph><path d="M6 2h10l4 4v9H6z" fill="#fff" stroke="#888" /><path d="M2 12h7l2-3h9v13H2z" fill="#6cc030" stroke="#2c6010" /></Glyph></button>
      <button aria-label="Save file" className="w-[34px] border-r border-gray-300"><Glyph><path d="M1 1h22v22H3l-2-2z" fill="#1a6cf0" stroke="#0a2a70" /><path d="M5 1h14v11H5z" fill="#e8e8e8" /><path d="M7 4h10M7 7h10" stroke="#aaa" /><path d="M6 15h12v8H6z" fill="#bbb" stroke="#333" /><path d="M8 16h4v6H8z" fill="#124" /></Glyph></button>
      <div className="relative ml-1 flex items-center">
        <select aria-label="Zoom" defaultValue="80%" className="h-6 w-[70px] appearance-none border border-gray-200 bg-white pl-[2px] font-['Open_Sans',sans-serif] text-[12px] text-black">
          <option>80%</option>
        </select>
        <span className="pointer-events-none absolute right-1 border-x-4 border-t-4 border-x-transparent border-t-black" />
      </div>
      <button aria-label="Zoom extents" className="ml-1 flex items-center gap-1"><Glyph><path d="M3 8V3h5M16 3h5v5M21 16v5h-5M8 21H3v-5" stroke="#222" strokeWidth="3" /><path d="M3 11v2M21 11v2M11 3h2M11 21h2" stroke="#222" strokeWidth="3" /><path d="M10 10l4 4M14 10l-4 4" stroke="#111" strokeWidth="1.5" /></Glyph><DownArrow /></button>
      <button aria-label="Preview" className="ml-[6px] flex items-center gap-[6px]"><Glyph><path d="M1 12C6 4 18 4 23 12 18 19 6 19 1 12z" fill="#fff" stroke="#345" strokeWidth="1.5" /><circle cx="12" cy="11.5" r="5.5" fill="#3fa4dc" stroke="#134" /><circle cx="12" cy="11.5" r="2" fill="#000" /></Glyph><DownArrow /></button>
      <button aria-label="Sketch" className="ml-[6px]"><Glyph><path d="M2 13c6-2 0 8 3 9 4 0 3-6 7-9" stroke="#411" strokeWidth="1.8" /><path d="M9 19l2-9L22 1c2 5 2 9-1 12l-9 6z" fill="#e22a1a" stroke="#411" /><path d="M21 2L13 15" stroke="#faa" strokeWidth="2" /></Glyph></button>
      <div className="ml-auto flex items-center gap-[3px]">
        <button aria-label="No preview" className="p-px"><Glyph><path d="M4 9l10-8c5 0 8 4 6 9l-8 5z" fill="#ccc" stroke="#777" /><ellipse cx="12" cy="17" rx="9" ry="5" fill="#333" stroke="#111" /></Glyph></button>
        <button aria-label="Wireframe preview" className="p-px"><Glyph><Cylinder body="#f4f4f4" cap="#ddd" /><ellipse cx="7" cy="15" rx="3" ry="5" transform="rotate(-45 7 15)" stroke="#444" /></Glyph></button>
        <button aria-label="Shaded preview" className="border border-[#3399ff] p-px"><Glyph><Cylinder body="#c41808" cap="#e23a28" /></Glyph></button>
        <span className="mx-1 h-5 w-px bg-gray-400" />
        <button aria-label="Selected only" className="p-px"><Glyph><Cylinder body="#ddd" cap="#6ab030" /><path d="M6 7l8-5c5 0 9 5 8 10l-6 5z" fill="#4e9a18" /><ellipse cx="16" cy="7" rx="2.5" ry="4" transform="rotate(-45 16 7)" fill="#2c6008" stroke="#8c4" /><path d="M1 4l18 17" stroke="#111" strokeWidth="1.5" /></Glyph></button>
        <button aria-label="Mesh quality" className="p-px"><Glyph><circle cx="12" cy="12" r="10" fill="#ddd" stroke="#444" /><path d="M12 2a10 10 0 0 0 0 20z" fill="#f08a10" stroke="#743" /></Glyph></button>
        <span className="h-5 w-px bg-gray-400" />
        <button aria-label="Document preview" className="flex items-center gap-[3px] p-px"><Glyph><path d="M8 3h9l5 7-3 9-8 3-8-5-1-8z" fill="#5cb0f0" stroke="#134a80" strokeWidth="1.5" /><ellipse cx="10" cy="9" rx="4" ry="3" fill="#bce0ff" /></Glyph><DownArrow /></button>
      </div>
    </div>
  );
}

const TABS: [string, string][] = [
  ['Maths', 'w-[52px]'], ['Sets', 'w-[47px]'], ['Vector', 'w-[58px]'], ['Curve', 'w-[52px]'], ['Surface', 'w-[65px]'],
  ['Mesh', 'w-[47px]'], ['Intersect', 'w-[77px]'], ['Transform', 'w-[77px]'], ['Kangaroo', 'w-[71px]'],
  ['LunchBox', 'w-[70px]'], ['Wb', 'w-[34px]'], ['Extra', 'w-[41px]'], ['U', 'w-[10px]'],
];

function GrasshopperWindow() {
  return (
    <div className="absolute top-[78px] left-[70px] w-[781px] rounded-t-lg rounded-b-md border border-[#1c1426] bg-[linear-gradient(180deg,#c9bedb_0,#c3aed8_28%,#5a4470_29%,#a685c4_50%,#8b68ad_100%)] px-[6px] pb-[6px] shadow-[0_3px_12px_2px_rgba(0,0,0,0.8),inset_0_0_0_1px_rgba(255,255,255,0.6)]">
      <header className={clsx(SEGOE, '-mx-[5px] mt-px flex h-[27px] items-start rounded-t-md bg-[radial-gradient(ellipse_80px_26px_at_335px_34px,#a98bc8_60%,transparent_100%),radial-gradient(ellipse_120px_26px_at_70px_12px,#c9bfd2_40%,transparent_100%),linear-gradient(90deg,#bdaecf_0,#4a375e_260px,#4a375e_620px,#5a4870_640px,#8d7ca6_100%)] pl-[5px] text-[12px] text-black')}>
        <h1 className="leading-6">Grasshopper - 曲面玻璃平板化*</h1>
        <div className="mr-1 ml-auto flex h-[18px] overflow-hidden rounded-b border border-t-0 border-[#2b2238] bg-gradient-to-b from-[#b8aec4] to-[#6a5a80]">
          <button aria-label="Minimize" className="flex w-7 items-end justify-center border-r border-[#2b2238] pb-1"><span className="h-1 w-3 border border-gray-700 bg-white" /></button>
          <button aria-label="Maximize" className="flex w-[26px] items-center justify-center border-r border-[#2b2238]"><span className="h-2 w-[10px] border-2 border-white outline outline-gray-700" /></button>
          <button aria-label="Close" className="flex w-[46px] items-center justify-center bg-gradient-to-b from-[#d88a78] via-[#b83a22] to-[#c0442c]"><Glyph size={12}><path d="M4 4l16 16M20 4L4 20" stroke="#444" strokeWidth="8" /><path d="M4 4l16 16M20 4L4 20" stroke="#fff" strokeWidth="5" /></Glyph></button>
        </div>
      </header>
      <div className="border border-[#33283f] bg-[#f0f0f0]">
        <nav className="flex h-[23px] items-center bg-gradient-to-r from-[#f2f2f2] to-white pl-[6px] font-['Liberation_Sans','Noto_Sans_CJK_SC',sans-serif] text-[11px] text-black">
          {['File', 'Edit', 'View', 'Display', 'Solution', 'Help'].map((m) => (
            <button key={m} className="mr-px px-2">{m}</button>
          ))}
          <span className="mr-[10px] ml-auto text-[12px]">曲面玻璃平板化</span>
        </nav>
        <div className={clsx(SONG, 'flex h-[22px] items-end overflow-hidden text-gray-500')}>
          <button className="h-[22px] w-[59px] shrink-0 rounded-t-lg border border-b-0 border-gray-400 bg-white pb-1 text-black">Params</button>
          {TABS.map(([name, w], i) => (
            <button key={name} className={clsx('h-[21px] shrink-0 text-left', w, i === 0 && 'ml-[9px]')}>{name}</button>
          ))}
        </div>
        <Ribbon />
        <CanvasToolbar />
        <Canvas />
        <footer className="flex h-6 items-center bg-gradient-to-r from-[#efefef] to-white pl-[2px] font-['Liberation_Sans',sans-serif] text-[11px] text-black">
          <Glyph size={16}><circle cx="12" cy="12" r="11" fill="#1c6fc4" stroke="#0b3160" strokeWidth="2" /><path d="M12 4v10M12 17v3" stroke="#fff" strokeWidth="4" /></Glyph>
          <span className="ml-[3px]">Autosave complete (120 seconds ago)</span>
          <span className="ml-auto text-gray-500">0.9.0014</span>
          <svg width="14" height="14" className="ml-1 self-end"><path d="M10 1h2v2h-2zM6 5h2v2H6zM10 5h2v2h-2zM2 9h2v2H2zM6 9h2v2H6zM10 9h2v2h-2z" fill="#aaa" /></svg>
        </footer>
      </div>
    </div>
  );
}

const STEPS = Array.from({ length: 125 }, (_, i) => i - 62);

function PerspectiveView() {
  return (
    <svg className="block h-[248px] w-full bg-[#333]" viewBox="717 65 614 248" preserveAspectRatio="xMinYMin slice" shapeRendering="crispEdges">
      <defs>
        <clipPath id="plane"><path d="M717 110L855 88 1000 65H1169L1331 162V313H717z" /></clipPath>
        <pattern id="mesh" width="4" height="5" patternUnits="userSpaceOnUse">
          <path d="M0 0h4v5H0z" fill="#fff" /><path d="M1 1h1v2H1zM3 3h1v1H3z" fill="#b4b4b4" />
        </pattern>
        <pattern id="meshdark" width="5" height="4" patternUnits="userSpaceOnUse" patternTransform="skewX(-12)">
          <path d="M0 0h5v4H0z" fill="#f8f8f8" /><path d="M1 1h3v2H1z" fill="#b4b4b4" />
        </pattern>
        <linearGradient id="fade" x1="0" x2="1"><stop offset=".3" stopColor="#fff" stopOpacity="0" /><stop offset="1" stopColor="#fff" /></linearGradient>
      </defs>
      <g clipPath="url(#plane)" stroke="#999" strokeWidth="1">
        {STEPS.map((k) => <line key={`a${k}`} x1="2617" y1="-183" x2={609 + k * 19.3 - (2617 - 609 - k * 19.3)} y2={312 + 495} />)}
        {STEPS.map((k) => <line key={`b${k}`} x1="764" y1="-183" x2={1086 + k * 7.95} y2="313" />)}
      </g>
      <path d="M1090 193L1296 142" stroke="#449944" strokeWidth="1.5" />
      <path d="M1050 257l36 56" stroke="#994444" strokeWidth="1.5" />
      <path d="M968 65h100l-3 45-5 50h-72l-6-20-10-35z" fill="url(#mesh)" />
      <path d="M975 155l16-3 28-20 40 20 12 14 3 24h5l5-3 5-7 1 14 4 20-1 8-10 20-25 10-32 4h-21l-14 8-20-5-15-5-10-9-2-13 1-15-4-8-7 2 1-14 5-18 12-13z" fill="#fff" />
      <path d="M1016 100l-28 103h45l27-103-6-35h-22z" fill="url(#meshdark)" />
      <path d="M1010 85l-22 120h62l14-120z" fill="url(#fade)" />
      <path d="M1032 65h9l-12 27-16 26 9-28z" fill="#555" />
      <path d="M1013 118l-13 32" stroke="#999" strokeWidth="2" strokeDasharray="3 2" />
      <path d="M960 219l4 12 22 8" fill="none" stroke="#8b1010" strokeWidth="3" strokeDasharray="2 1" />
      <path d="M985 239v20M989 240v14M982 242v8" fill="none" stroke="#0a640a" strokeWidth="3" strokeDasharray="3 1" />
      <path d="M1013 234l28 2" fill="none" stroke="#0a640a" strokeWidth="3" strokeDasharray="1 2" />
      <path d="M1038 236l20-2 17-7 8-12" fill="none" stroke="#8b1010" strokeWidth="3" strokeDasharray="2 1" />
      <path d="M1082 197l3 16M1056 210l25-9M1058 220l22-8" fill="none" stroke="#0a640a" strokeWidth="1.5" strokeDasharray="1 3" />
      <path d="M952 188v3M957 197l3-2M1060 168v2M1060 176v2" stroke="#8b1010" />
    </svg>
  );
}

function FrontView() {
  return (
    <svg className="block h-[247px] w-full bg-[#333]" preserveAspectRatio="xMinYMin slice" viewBox="717 318 614 247" shapeRendering="crispEdges">
      <defs>
        <pattern id="grid8" width="8" height="8" x="6" y="1" patternUnits="userSpaceOnUse"><path d="M0 .5h8M.5 0v8" stroke="#999" /></pattern>
        <pattern id="louvre" width="4" height="8" patternUnits="userSpaceOnUse"><path d="M0 0h4v8H0z" fill="#e4e4e4" /><path d="M1 0h1v5H1zM3 3h1v4H3z" fill="#777" /></pattern>
      </defs>
      <rect x="717" y="318" width="900" height="247" fill="url(#grid8)" />
      <path d="M1127 441h500" stroke="#994444" strokeWidth="2" />
      <path d="M972 318h102l11 68H961z" fill="#fff" />
      <path d="M929 385h36l3 7h36l4-7h109l11 65-10 4v3l-10 3v4l-11 3v4h-17v4l-10 8h-92l-12-11-7-3-10-3v-3l-11-3v-4l-10-3v-3l-10-3z" fill="#fff" />
      <path d="M972 318h12l23 72-42 3-4-8z" fill="url(#louvre)" />
      <path d="M1062 318h8l6 68h-36z" fill="url(#louvre)" />
      <path d="M972 318h4l-9 68h-6zM1064 318h5v40l-8 28h-8z" fill="#555" fillOpacity=".6" />
      <path d="M923 418h24M1010 421l60-4h46" fill="none" stroke="#7d0a0a" strokeWidth="3" strokeDasharray="7 1" />
      <path d="M1015 425l35-3M1008 432h20M1035 438h8" fill="none" stroke="#7d0a0a" strokeDasharray="1 3" strokeWidth="2" />
      <path d="M945 418l-7 29" stroke="#0a640a" strokeWidth="6" strokeDasharray="7 1" />
      <path d="M978 429l33-8" stroke="#0a640a" strokeWidth="6" strokeDasharray="2 2" />
      <path d="M1074 387l4 30M1080 387l4 30M1086 387l4 30M1091 386l5 31" stroke="#0a640a" strokeWidth="2" strokeDasharray="6 1" />
      <path d="M947 453h6M957 460h6M1047 480l8-4 9-1M955 432v14M962 436v18" fill="none" stroke="#0a640a" strokeWidth="2" strokeDasharray="4 2" />
    </svg>
  );
}

function SideDock() {
  return (
    <aside className="flex w-24 shrink-0 bg-[#f0f0f0]">
      <div className="w-[25px]">
        <div className="mt-[5px] mb-1 h-px border-t-2 border-dotted border-gray-400" />
        <button aria-label="Rhino" className="border-b border-gray-400 pb-1">
          <svg width="24" height="24" viewBox="0 0 24 24"><path d="M0 0h16v22H0z" fill="#444" /><path d="M0 4l4 2 1-5 6 5 3 4 9-4-3 8-6 3v5l-6-6-4 1-1 4-3-3z" fill="#eee" stroke="#333" /><path d="M5 10l4 2M2 8l2 3" stroke="#444" /></svg>
        </button>
      </div>
      <div className="h-[429px] w-[29px] border border-gray-400 bg-gradient-to-r from-[#f6f6f6] to-[#d4d4d4]">
        <div className="mt-1 h-px border-t-2 border-dotted border-gray-400" />
        {SIDE_TOOLS.map(([label, art]) => <ToolButton key={label} label={label}>{art}</ToolButton>)}
      </div>
      <div className="flex-1 border-l border-gray-400 bg-[#e4e4e4]">
        <div className="my-1 h-px border-t-2 border-dotted border-gray-400" />
        {Array.from({ length: 13 }, (_, i) => (
          <div key={i} className={clsx('h-[30px] border border-gray-400 pt-[3px] pl-[3px]', i === 8 ? 'bg-[#b5c7dc]' : 'bg-[#dcdcdc]')}>
            <Glyph>
              {i === 0 && <circle cx="12" cy="12" r="9" stroke="#b01818" strokeWidth="3" />}
              {i === 12 && <path d="M3 8h4V5h4V2h8v20h-8v-3H7v-3H3z" fill={PINK} stroke="#401040" />}
              {i > 0 && i < 12 && <path d="M7 5l12 2v14L5 18zM7 5l5-2M5 12h14" stroke="#777" strokeWidth="1.5" />}
            </Glyph>
          </div>
        ))}
      </div>
    </aside>
  );
}

function MaterialButton({ name, bg, ball, metal }: { name: string; bg: string; ball: string; metal: boolean }) {
  return (
    <button aria-label={name} className="flex w-9 shrink-0 justify-center">
      <svg width="32" height="32" viewBox="0 0 32 32">
        <path d="M0 0h32v32H0z" fill={bg} />
        <circle cx="16" cy="16" r="15" fill={ball} />
        <circle cx="16" cy="16" r="15" fill="url(#ballshade)" />
        {metal ? (
          <path d="M8 15c0-14 21-14 21 0-4 3-17 3-21 0z" fill="#111" fillOpacity=".85" />
        ) : (
          <path d="M10 4c3-2 9-2 12 0l1 5c-4-1-10-1-14 0z" fill="#fff" fillOpacity=".7" />
        )}
        {metal && <path d="M13 3c2-1 5-1 7 0l1 3h-9z" fill="#fff" fillOpacity=".8" />}
        <circle cx="26" cy="26" r="5.5" fill="#f59a2c" stroke="#fff" />
        <path d="M23 25c0-3 6-3 6 0s-3 4-4 1" stroke="#fff" strokeWidth="1.5" fill="none" />
      </svg>
    </button>
  );
}

function TopBars() {
  const bar = 'bg-gradient-to-b from-[#f4f4f4] to-[#d6d6d6]';
  return (
    <>
      <div className="flex h-[26px] overflow-hidden border-b border-gray-400">
        <div className={clsx('flex items-center border-r border-gray-400 pl-[2px]', bar)}>
          {FILE_TOOLS.map(([label, art]) => <ToolButton key={label} label={label}>{art}</ToolButton>)}
        </div>
        <div className={clsx('flex items-center border-r border-gray-400', bar)}>
          <Grip />
          {TSPLINE_TOP.map(([label, art]) => <ToolButton key={label} label={label}>{art}</ToolButton>)}
        </div>
      </div>
      <div className="flex h-[37px] items-start overflow-hidden">
        <div className={clsx(SONG, 'flex h-[29px] items-center border-b border-gray-400 text-black', bar)}>
          <button className="w-[64px] pl-[3px] text-left whitespace-nowrap">Edit mode</button>
          {([
            ['Create', 'w-[72px]', <><path d="M2 7l8-5 11 3 1 10-7 7-11-4z" fill="#dd86d8" stroke="#401040" /><path d="M2 7l11 3 8-5M13 10l2 12M8 8l1 12M3 13l11 3 8-6M18 7l1 11" stroke="#401040" /></>],
            ['Modify', 'w-[72px]', <><path d="M1 6l6-4 4 7 6-6 5 12-7 3-1 4-6 1-1-8z" fill="#f4f" stroke="#401040" /><path d="M4 4l6 11M11 9l2 12M14 6l4 11M6 13l14-5" stroke="#401040" /></>],
            ['Utility', 'w-[80px]', <><circle cx="12" cy="12" r="9" stroke="#401040" strokeWidth="5" strokeDasharray="4 3.07" /><circle cx="12" cy="12" r="8" fill="#d838d8" stroke="#401040" /><path d="M9 4h6v9H9z" fill="#999" stroke="#444" /></>],
          ] as [string, string, ReactNode][]).map(([label, w, art]) => (
            <button key={label} className={clsx('flex items-center gap-1 pl-[3px]', w)}>
              <Glyph size={22}>{art}</Glyph>
              {label}
            </button>
          ))}
          <button className="w-[81px] pl-1 text-left whitespace-nowrap">All Commands</button>
        </div>
        <div className={clsx('flex h-[29px] items-center border-x border-b border-gray-400', bar)}>
          <Grip />
          {TS_TOOLS.map(([label, art]) => <ToolButton key={label} label={label} corner={false}>{art}</ToolButton>)}
        </div>
        <div className={clsx('flex h-9 flex-1 items-center', bar)}>
          <Grip />
          <button aria-label="Render material" className="flex w-9 shrink-0 justify-center">
            <svg width="32" height="32" viewBox="0 0 32 32" fill="none">
              <defs>
                <radialGradient id="ballshade" cx=".4" cy=".3" r=".7"><stop stopColor="#fff" stopOpacity=".35" /><stop offset=".5" stopColor="#fff" stopOpacity="0" /><stop offset="1" stopColor="#000" stopOpacity=".4" /></radialGradient>
              </defs>
              <path d="M0 0h32v32H0z" fill="#6c8aa4" /><circle cx="16" cy="16" r="13" fill="#f09418" stroke="#fff" strokeWidth="2.5" /><path d="M8 10c3 6 6 1 9 0 5-1 8 4 5 8-3 3-7 3-9 1" stroke="#fff" strokeWidth="3.5" />
            </svg>
          </button>
          {MATERIALS.map(([name, bg, ball, metal]) => <MaterialButton key={name} name={name} bg={bg} ball={ball} metal={metal} />)}
          <button aria-label="Black" className="flex w-9 shrink-0 justify-center"><svg width="32" height="32" viewBox="0 0 32 32"><circle cx="16" cy="16" r="12" fill="#080808" /><ellipse cx="12" cy="11" rx="4" ry="3.5" fill="#fff" /></svg></button>
          <button aria-label="Transparent" className="flex w-9 shrink-0 justify-center">
            <svg width="32" height="32" viewBox="0 0 32 32"><defs><pattern id="chk" width="8" height="8" patternUnits="userSpaceOnUse"><path d="M0 0h8v8H0z" fill="#eee" /><path d="M0 0h4v4H0zM4 4h4v4H4z" fill="#999" /></pattern></defs><path d="M0 0h32v32H0z" fill="url(#chk)" /><circle cx="16" cy="16" r="12" fill="#aaa" fillOpacity=".6" stroke="#222" /><ellipse cx="11" cy="10" rx="3" ry="2" fill="#fff" /></svg>
          </button>
        </div>
      </div>
    </>
  );
}

function BottomBars() {
  const bar = 'bg-gradient-to-b from-[#f4f4f4] to-[#d6d6d6]';
  return (
    <>
      <div className="flex h-[30px] border-b border-gray-400">
        <div className={clsx('flex w-[200px] items-center border-t border-gray-400 pl-[2px]', bar)}>
          {BEAM_TOOLS.map(([label, art]) => <ToolButton key={label} label={label} corner={false}>{art}</ToolButton>)}
        </div>
      </div>
      <div className="flex h-[30px] items-start border-b border-gray-400">
        <div className={clsx('flex h-[29px] items-center border-r border-gray-400 pr-[2px] pl-[2px]', bar)}>
          {SLAB_TOOLS.map(([label, art]) => <ToolButton key={label} label={label} corner={false}>{art}</ToolButton>)}
        </div>
        <div className={clsx('flex h-[29px] items-center border-r border-gray-400', bar)}>
          <Grip />
          {ARCH_TOOLS.map(([label, art]) => <ToolButton key={label} label={label} corner={false}>{art}</ToolButton>)}
        </div>
        <div className={clsx('flex h-[29px] items-center border-r border-gray-400', bar)}>
          <Grip />
          {WALL_TOOLS.map(([label, art]) => <ToolButton key={label} label={label} corner={false}>{art}</ToolButton>)}
        </div>
        <div className={clsx(SONG, 'mr-[5px] ml-auto flex h-[25px] items-center border border-gray-400 pr-1 text-black')}>
          <Grip />
          <div className="w-[2px]" />
          {SNAPS.map(([label, on]) => (
            <label key={label} className="relative flex w-[65px] items-center gap-[6px]">
              <input type="checkbox" defaultChecked={on} className="h-[13px] w-[13px] appearance-none border border-gray-500 bg-[#e8e8ec]" />
              {on && <svg width="9" height="9" viewBox="0 0 9 9" className="pointer-events-none absolute left-[2px]"><path d="M1 4l2 4 5-7" fill="none" stroke="#35539c" strokeWidth="2" /></svg>}
              {label}
            </label>
          ))}
          {['Project', 'STrack', 'Disable'].map((label) => (
            <button key={label} className="flex w-[65px] items-center gap-1">
              <span className={clsx('-ml-[2px] h-[17px] w-[17px] shrink-0 rounded-[3px] border', label === 'STrack' ? 'border-[#2c628b] bg-[#8c8c8c] shadow-[inset_0_0_0_1px_#4fb0e0]' : 'border-gray-500 bg-gradient-to-b from-white to-[#d0d0d0]')} />
              {label}
            </button>
          ))}
        </div>
      </div>
    </>
  );
}

const MODES: [string, boolean, string][] = [
  ['Snap', true, 'w-[51px]'],
  ['Ortho', false, 'w-[51px]'],
  ['Planar', false, 'w-[51px]'],
  ['Osnap', true, 'w-[51px]'],
  ['Record History', false, 'w-[110px]'],
];

function StatusBar() {
  return (
    <div className={clsx(SEGOE, 'flex h-[21px] items-center bg-[#f0edec] text-[12px] text-black')}>
      <span className="w-[22px] border-r border-gray-300">ne</span>
      <span className="ml-[5px] w-[88px]">x -20.233</span>
      <span className="w-[88px]">y -28.547</span>
      <span className="w-[177px]">z 0.000</span>
      <span className="mr-[2px] h-3 w-3 bg-black" />
      <span className="w-[153px]">Default</span>
      {MODES.map(([label, on, w]) => (
        <button key={label} className={clsx('h-[19px] border-l border-gray-300', w, on && 'bg-white font-bold')}>{label}</button>
      ))}
      <div className="ml-auto flex h-full w-[167px] items-center justify-between border-l border-gray-400 bg-gradient-to-b from-[#e8f4ff] to-white px-1 pr-2 font-bold text-[#4a90d0]">
        <svg width="16" height="18" viewBox="0 0 16 18" fill="none"><path d="M1 2l14-1v15L1 17z" fill="#e84e10" /><path d="M12 5c-5-2-9 0-6 3 2 1 5 1 5 3s-5 2-7 1" stroke="#fff" strokeWidth="2.5" /></svg>
        <span className="text-[14px]">英</span>
        <Glyph size={15}><path d="M15 2c2 10-4 16-12 15 4 6 18 6 18-5 0-4-2-8-6-10z" fill="#4a90d0" /></Glyph>
        <Glyph size={15}><path d="M4 5h6v6H4zM15 14h4v4l-3 5-2-1 1-3z" fill="#4a90d0" /></Glyph>
        <svg width="18" height="12" viewBox="0 0 18 12"><path d="M0 0h18v12H0z" fill="#4a90d0" /><path d="M2 3h14M2 6h14M4 9h10" stroke="#fff" strokeDasharray="2 1" /></svg>
        <Glyph size={14}><circle cx="12" cy="6" r="5" fill="#aaa" /><path d="M3 23V15l4-3h10l4 3v8z" fill="#aaa" /></Glyph>
        <Glyph size={16}><path d="M1 7l7-5c2 3 6 3 8 0l7 5-3 5-2-1v12H6V11l-2 1z" fill="#4a90d0" /></Glyph>
        <Glyph size={15}><path d="M2 21L13 10" stroke="#4a90d0" strokeWidth="5" /><path d="M14 2a7 7 0 1 0 8 8l-5 1-4-4z" fill="#4a90d0" /></Glyph>
      </div>
    </div>
  );
}

function Taskbar() {
  const task = 'flex h-[38px] w-[159px] shrink-0 items-center gap-1 rounded-sm border border-[#2c1e18] px-2 text-left shadow-[inset_0_0_0_1px_rgba(255,255,255,0.4)]';
  return (
    <div className={clsx(SEGOE, 'flex h-10 items-center border-t border-black bg-[linear-gradient(90deg,#1a0d26_0,#1a0d26_134px,#7d5a43_142px,#7d5a43_1160px,#1a0d26_1170px)] text-[12px] text-white')}>
      <button aria-label="Start" className="w-[14px] overflow-hidden"><svg width="32" height="38" viewBox="0 0 32 38" className="-ml-5"><circle cx="16" cy="19" r="16" fill="#3a7fb0" stroke="#9cc" /><path d="M17 14l10-3-3 9-8-1z" fill="#8c3" /><path d="M15 21l9 1-2 8-9-2z" fill="#fb2" /></svg></button>
      <button aria-label="Browser" className="ml-5"><svg width="34" height="34" viewBox="0 0 34 34"><path d="M17 16C6 8 10 2 17 3c7-1 11 5 0 13z" fill="#5cc832" /><path d="M18 17c8-11 14-7 13 0 1 7-5 11-13 0z" fill="#f5b83c" /><path d="M17 18c11 8 7 14 0 13-7 1-11-5 0-13z" fill="#f08cc0" /><path d="M16 17C8 28 2 24 3 17 2 10 8 6 16 17z" fill="#3ca4ec" /></svg></button>
      <span className="ml-4 h-8 w-2 border-x-2 border-dotted border-gray-600" />
      <button aria-label="Switch windows" className="ml-[22px] flex h-6 w-[31px] items-center justify-center border border-gray-400 bg-[#35506c]"><svg width="26" height="20" viewBox="0 0 26 20"><path d="M4 3h9v9H4z" fill="#9cc" stroke="#fff" /><path d="M9 5h9v9H9z" fill="#6a9" stroke="#fff" /><path d="M14 7h9v9h-9z" fill="#385" stroke="#fff" /></svg></button>
      <button aria-label="Show desktop" className="ml-[31px] h-6 w-[31px] border border-gray-300 bg-gradient-to-br from-[#1c56c8] via-[#5c98f0] to-[#1c50b8]" />
      <div className="ml-[17px] flex gap-[3px]">
        <button className={clsx(task, 'bg-gradient-to-b from-[#a89284] to-[#866450]')}>
          <svg width="32" height="32" viewBox="0 0 32 32" fill="none"><circle cx="16" cy="16" r="14" fill="#1878c0" stroke="#eee" strokeWidth="2" /><path d="M23 8c-6-4-15-1-13 5 1 3 12 2 12 7s-8 6-14 3" stroke="#fff" strokeWidth="5" /></svg>
          <span className="truncate">vampire_ji - 学犀...</span>
        </button>
        <button className={clsx(task, 'bg-[radial-gradient(circle_at_92%_10%,#8a6fae_8%,transparent_20%),linear-gradient(#a28a7c,#8a644c)]')}>
          <svg width="32" height="32" viewBox="0 0 32 32"><path d="M3 2l8 1v26l-7 1z" fill="#f7e9a0" stroke="#b89a3c" /><path d="M10 3l10 2v22l-9 3z" fill="#efd670" stroke="#b89a3c" /></svg>
          <span>2</span>
        </button>
        <button className={clsx(task, 'bg-gradient-to-b from-[#d6c8c4] via-[#b09488] to-[#c0a698]')}>
          <svg width="32" height="32" viewBox="0 0 32 32"><path d="M0 0h32v32H0z" fill="#0a0a0a" /><path d="M2 1l10 1 4 8 7-2-1 5 10-4-6 9c3 6 1 11-5 11-5 0-9-4-13-9l-7-5 2-5z" fill="#bbb" /><path d="M15 19c5-4 9-2 10 2 1 5-3 7-7 5z" fill="#eee" /><path d="M1 11l8 4 6-2-9-5z" fill="#222" /><circle cx="7" cy="15" r="1.5" fill="#e22" /></svg>
          <span className="truncate">Untitled - Rhino...</span>
        </button>
      </div>
      <div className="ml-auto flex h-full items-center">
        <span className="mr-2 h-8 w-2 border-x-2 border-dotted border-[#3c2a20]" />
        <svg width="16" height="16" viewBox="0 0 16 16" fill="none"><path d="M0 0h16v16H0z" fill="#e84e10" stroke="#fff" strokeWidth="2" /><path d="M12 4C7 2 3 4 6 7c2 1 5 1 5 2 0 3-5 3-7 2" stroke="#fff" strokeWidth="2" /></svg>
        <span className="ml-4 border-x-4 border-b-4 border-x-transparent border-b-white" />
        <svg width="66" height="18" viewBox="0 0 66 18" fill="none" className="ml-[13px]">
          <path d="M1 13v2M4 11v4M7 8v7M10 5v10M13 2v13" stroke="#fff" strokeWidth="2" />
          <path d="M10 7l5 9H5z" fill="#fd0" stroke="#640" /><path d="M10 10v3" stroke="#000" />
          <path d="M34 4h-7v11h9v-3" stroke="#fff" strokeWidth="2" /><path d="M32 6h6v4l-2 2h-2l-2-2zM33 2v4M37 2v4" fill="#fff" stroke="#fff" />
          <path d="M49 7h3l5-5v14l-5-5h-3z" fill="#fff" /><path d="M59 6c2 2 2 4 0 6M61 4c3 3 3 7 0 10" stroke="#ccc" />
        </svg>
        <time className="ml-[6px] w-[72px] text-center leading-[18px]">19:06<br />2012/10/22</time>
        <button aria-label="Desktop" className="ml-1 h-[38px] w-[13px] border border-gray-500 bg-gradient-to-b from-[#554a60] to-[#1a0d26]" />
      </div>
    </div>
  );
}

export default function App() {
  return (
    <div className="min-h-screen overflow-hidden bg-white">
      <div className="relative mr-[33px] bg-[#f0f0f0]">
        <TopBars />
        <main className="flex h-[504px]">
          <SideDock />
          <div className="mr-1 w-[615px] border-t-2 border-l-2 border-gray-500 bg-[#333] bg-[linear-gradient(90deg,#999_1px,transparent_1px),linear-gradient(#999_1px,transparent_1px)] bg-size-[8px_8px]">
            <div className="flex h-[16px]">
              <h2 className="w-10 bg-[#b9c8d6] pl-2 font-['Liberation_Sans',sans-serif] text-[13px] leading-4 text-gray-700">Top</h2>
              <span className="ml-[266px] w-px bg-[#449944]" />
            </div>
          </div>
          <div className="flex min-w-0 flex-1 flex-col">
            <section className="relative mb-1 border-t-2 border-r-2 border-l-2 border-gray-500 border-r-gray-100">
              <PerspectiveView />
              <h2 className="absolute top-0 left-0 w-[92px] bg-[#8ea5c4] pl-[6px] font-['Liberation_Sans',sans-serif] text-[13px] leading-4 text-black">Perspective</h2>
              <span className="absolute top-0 left-[92px] h-4 w-[40px] bg-[#333]" />
            </section>
            <section className="border-t border-r-2 border-l-2 border-gray-500 border-r-gray-100">
              <FrontView />
            </section>
          </div>
        </main>
        <BottomBars />
        <StatusBar />
        <Taskbar />
        <GrasshopperWindow />
      </div>
      <footer className="flex items-center pt-[44px] pl-[486px] text-white [text-shadow:-1px_0_#777,1px_0_#777,0_-1px_#777,0_1px_#777]">
        <svg width="34" height="28" viewBox="0 0 34 28"><path d="M1 10l5 1 1-9 6-1 3 8 4 8 3-1 9-6-4 10-6 7-5-1-2-4-8-4-2-4z" fill="#ccc" stroke="#999" /><path d="M8 5l3 8M13 13l7 8M22 20l7-5" stroke="#fff" strokeWidth="2" /></svg>
        <p className="ml-[6px] flex items-baseline font-['Noto_Sans_CJK_SC',sans-serif] text-[12px] leading-8 whitespace-nowrap">
          <span className="text-[#ffc8c8]">学犀牛</span>
          <span>中文网</span>
          <span className="ml-[6px] font-['Liberation_Mono',monospace]">xuexiniu.com</span>
          <span className="mx-[10px]">-</span>
          <span>国内最大的</span>
          <span className={SONG}>Rhino</span>
          <span>技术交流平台</span>
        </p>
      </footer>
    </div>
  );
}
